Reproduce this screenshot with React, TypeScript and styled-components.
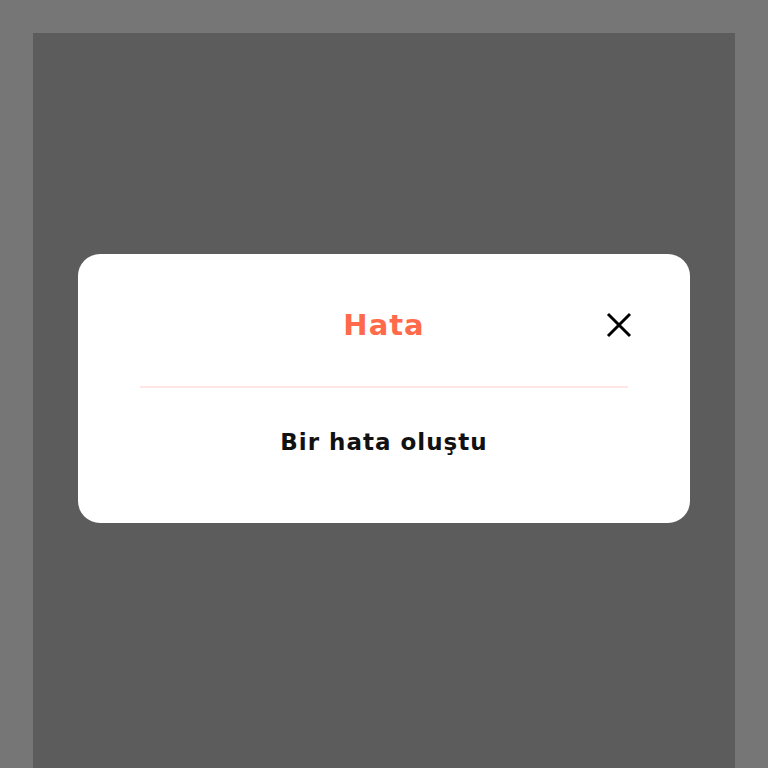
import styled, { createGlobalStyle } from "styled-components";

const GlobalStyle = createGlobalStyle`
  html, body {
    margin: 0;
    padding: 0;
    background: #767676;
  }
  * { box-sizing: border-box; }
`;

const Frame = styled.div`
  padding: 33px 33px 0 33px;
  height: 768px;
  overflow: hidden;
`;

const Backdrop = styled.div`
  height: 735px;
  background: #5c5c5c;
  display: flex;
  justify-content: center;
  align-items: flex-start;
  padding-top: 221px;
`;

const Modal = styled.div`
  width: 612px;
  height: 269px;
  background: #ffffff;
  border-radius: 22px;
  padding: 48px 0 0 0;
  font-family: "DejaVu Sans", "Open Sans", sans-serif;
`;

const Header = styled.div`
  display: grid;
  grid-template-columns: 1fr auto 1fr;
  align-items: center;
  height: 46px;
  padding: 0 58px;
`;

const Title = styled.h2`
  grid-column: 2;
  margin: 0;
  font-size: 29px;
  font-weight: 700;
  color: #ff6a4a;
  letter-spacing: 1px;
`;

const CloseButton = styled.button`
  grid-column: 3;
  justify-self: end;
  width: 26px;
  height: 26px;
  padding: 0;
  border: none;
  background: transparent;
  display: flex;
  align-items: center;
  justify-content: center;
  cursor: pointer;
`;

const Divider = styled.hr`
  margin: 38px 62px 0 62px;
  border: none;
  height: 2px;
  background: #ffe6e4;
`;

const Message = styled.p`
  margin: 39px 0 0 0;
  text-align: center;
  font-size: 23px;
  line-height: 30px;
  font-weight: 700;
  color: #111111;
  letter-spacing: 1px;
`;

export default function App() {
  return (
    <>
      <GlobalStyle />
      <Frame>
        <Backdrop>
          <Modal>
            <Header>
              <Title>Hata</Title>
              <CloseButton aria-label="Kapat">
                <svg width="26" height="26" viewBox="0 0 26 26">
                  <path
                    d="M2 2 L24 24 M24 2 L2 24"
                    stroke="#000"
                    strokeWidth="3"
                    strokeLinecap="butt"
                  />
                </svg>
              </CloseButton>
            </Header>
            <Divider />
            <Message>Bir hata oluştu</Message>
          </Modal>
        </Backdrop>
      </Frame>
    </>
  );
}
